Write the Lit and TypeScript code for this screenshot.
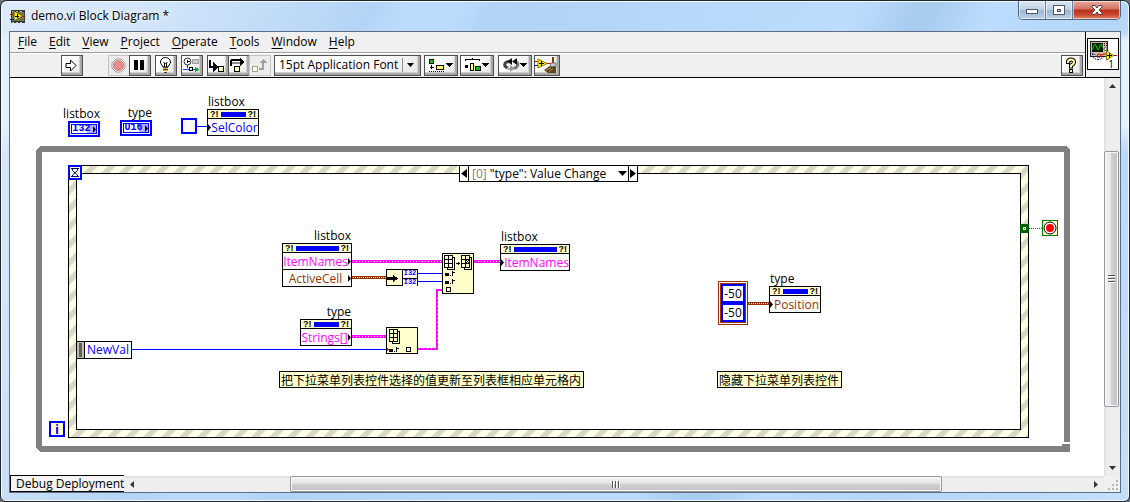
import { LitElement, html, svg, css, nothing, TemplateResult } from "lit";
import { customElement, property } from "lit/decorators.js";
import { styleMap } from "lit/directives/style-map.js";

/* Diagram coordinates start at the canvas corner. */
const ORIGIN = { x: 10, y: 78 };
const at = (x: number, y: number, w?: number, h?: number) =>
  styleMap({
    left: `${x - ORIGIN.x}px`,
    top: `${y - ORIGIN.y}px`,
    ...(w ? { width: `${w}px` } : {}),
    ...(h ? { height: `${h}px` } : {}),
  });

const icon = (w: number, h: number, body: unknown) =>
  html`<svg width=${w} height=${h} viewBox="0 0 ${w} ${h}" shape-rendering="crispEdges" aria-hidden="true">${body}</svg>`;

const viIcon = icon(15, 13, svg`
  <rect x="1" width="14" height="13" fill="#3a3a30"/>
  <path d="M2 1h2M6 1h2M10 1h2M2 12h2M6 12h2M10 12h2" stroke="#b8b89a" stroke-width="1"/>
  <rect x="2" y="2" width="12" height="9" fill="#6d7b4c"/>
  <path d="M4 1L13 6L4 11z" fill="#ffe600" stroke="#554" shape-rendering="auto"/>
  <path d="M5 6.500h4M7.500 4v4" stroke="#000"/>
  <path d="M0 4.500h4M13 6.500h2" stroke="#e00000"/><path d="M0 9.500h4" stroke="#0000d0"/>`);

const runIcon = icon(14, 13, svg`<path d="M2 4.500H6.500V1L12 6.500L6.500 12V8.500H2z" fill="#fff" stroke="#000" shape-rendering="auto"/>`);
const abortIcon = icon(15, 15, svg`<path d="M5 1h5l4 4v5l-4 4H5l-4-4V5z" fill="#fff" stroke="#9a9a9a" shape-rendering="auto"/><circle cx="7.500" cy="7.500" r="5" fill="#e68a8a" stroke="#d08080" shape-rendering="auto"/>`);
const pauseIcon = icon(12, 12, svg`<path d="M1 1h4v10H1zM7 1h4v10H7z" fill="#000"/>`);
const bulbIcon = icon(13, 16, svg`<path d="M4 10C4 8.500 1.500 7.500 1.500 5a5 4.500 0 0 1 10 0C11.500 7.500 9 8.500 9 10z" fill="#fff" stroke="#000" shape-rendering="auto"/><path d="M4.500 5l2 2 2-2M5.500 6v4M7.500 6v4" stroke="#000" fill="none" shape-rendering="auto"/><path d="M4 11h5v3H4z" fill="#f5b400"/><path d="M4 10.500h5M4 12.500h5M5 15h3" stroke="#444"/>`);
const retainIcon = icon(17, 16, svg`<circle cx="4.500" cy="4.500" r="3.500" fill="#fff" stroke="#333" shape-rendering="auto"/><path d="M3.500 2.500v4l3-2z" fill="#000"/><rect x="9.500" y="2.500" width="6" height="4" fill="#c9c9c9" stroke="#a0a0a0"/><path d="M4.500 8v3" stroke="#333"/><path d="M0 12.500h6" stroke="#0040ff"/><path d="M6.500 10.500h3v3h-3z" fill="#fff" stroke="#000"/><path d="M10 12.500h4" stroke="#0040ff"/><path d="M12 9.500l4 3-4 3z" fill="#00b400"/>`);
const intoIcon = icon(18, 15, svg`<path d="M2 2v7h5" stroke="#000" stroke-width="2" fill="none"/><path d="M5 4l5 5-5 5z" fill="#000"/><rect x="10.500" y="8.500" width="5" height="5" fill="#ffffb0" stroke="#000"/>`);
const overIcon = icon(16, 15, svg`<path d="M1 8V4q0-2 2-2h8" stroke="#000" stroke-width="2" fill="none"/><path d="M2 4.500h9" stroke="#888" stroke-width="2"/><path d="M10 0l5 4-5 4z" fill="#000"/><rect x="4.500" y="8.500" width="5" height="5" fill="#ffffb0" stroke="#000"/>`);
const outIcon = icon(18, 15, svg`<rect x="2.500" y="8.500" width="5" height="5" fill="#ffffd8" stroke="#a0a0a0"/><path d="M9 11h4V5" stroke="#a0a0a0" stroke-width="2" fill="none"/><path d="M9 5l4-4 4 4z" fill="#a0a0a0"/>`);
const caret = svg`<path d="M0 5h7l-3.500 4z" fill="#000"/>`;
const alignIcon = icon(24, 14, svg`<rect x=".5" y="1.500" width="4" height="4" fill="#00c800" stroke="#000"/><path d="M2.500 7v4M.5 9.500h4" stroke="#000"/><rect x="7.500" y="7.500" width="7" height="4" fill="#ffff70" stroke="#000"/><path d="M0 13.500h16" stroke="#000" stroke-dasharray="1 1"/><g transform="translate(17 0)">${caret}</g>`);
const distIcon = icon(24, 14, svg`<path d="M.5 3V1.500h14V3M7.500 0v2" stroke="#000" fill="none"/><rect x="0" y="7" width="3" height="3"/><rect x="5.500" y="5.500" width="3" height="7" fill="#ffff70" stroke="#000"/><rect x="10.500" y="8.500" width="5" height="4" fill="#00c800" stroke="#000"/><g transform="translate(17 0)">${caret}</g>`);
const orderIcon = icon(24, 14, svg`<path d="M5 10C0 8 1 4 6 3.500" stroke="#444" stroke-width="3" fill="none" shape-rendering="auto"/><path d="M12 3.500c4 1 4 5-1 7" stroke="#777" stroke-width="3" fill="none" shape-rendering="auto"/><path d="M9 0v7L4 3.500zM14 0v7L9 3.500z" fill="#111" shape-rendering="auto"/><path d="M4 10c2 1 2 1 4 1" stroke="#aaa" stroke-width="2" fill="none" shape-rendering="auto"/><path d="M7 7l5 3.500L7 14z" fill="#999" shape-rendering="auto"/><g transform="translate(17 0)">${caret}</g>`);
const cleanIcon = icon(22, 16, svg`<path d="M0 4.500h4M10 6.500h6" stroke="#e00"/><path d="M0 8.500h4" stroke="#00d"/><path d="M3 2l9 4.500-9 4.500z" fill="#ffee20" stroke="#8a7a00" shape-rendering="auto"/><path d="M4 6.500h5M6.500 4v5" stroke="#000"/><path d="M18 0v6" stroke="#7a3c10" stroke-width="2"/><path d="M16 6h5v4h-6z" fill="#c8c8c8" stroke="#777" shape-rendering="auto"/><path d="M14 9.500h7V16H13l-4-3z" fill="#5c4320" shape-rendering="auto"/><path d="M11 13l5-2M14 14.500l4-3" stroke="#b09050" shape-rendering="auto"/>`);
const helpIcon = icon(12, 16, svg`<g fill="none" stroke-linecap="square" shape-rendering="auto"><path d="M3 5q0-2.500 3-2.500t3 2.500q0 2-3 3.500v1" stroke="#000" stroke-width="4"/><path d="M3 5q0-2.500 3-2.500t3 2.500q0 2-3 3.500v1" stroke="#fff8a0" stroke-width="2"/></g><rect x="4.500" y="12.500" width="3" height="3" fill="#fff8a0" stroke="#000"/>`);
const scopeIcon = icon(28, 20, svg`<rect x=".5" y=".5" width="17" height="15" fill="#c8c0a0" stroke="#222"/><rect x="2" y="2" width="11" height="9" fill="#001800"/><path d="M2.500 8.500l2-5h1l2 5h1l2-5h1l1 3" stroke="#00e000" fill="none" shape-rendering="auto"/><path d="M14 2.500h1M16 2.500h1M14 4.500h1M16 4.500h1" stroke="#400"/><circle cx="15.500" cy="8" r="1.500" fill="#fff" stroke="#555" shape-rendering="auto"/><path d="M2 13.500h4" stroke="#777"/><path d="M2.500 12v3q3 5 8 3l3-2" fill="none" stroke="#0000b0" stroke-dasharray="2 1" shape-rendering="auto"/><path d="M8 17q-2-4 1-4t0 4M11 14l3-1h2M23 14.500h4" fill="none" stroke="#e00000" shape-rendering="auto"/><path d="M16.500 10v9l7-4.500z" fill="#ffee20" stroke="#887800" shape-rendering="auto"/><path d="M17 14.500h5M19.500 12v5" stroke="#000"/>`);

const tri = (dir: "l" | "r" | "u" | "d", s: number, fill = "#000", span = s * 2 - 1) => {
  const w = dir === "l" || dir === "r" ? s : span;
  const h = dir === "l" || dir === "r" ? span : s;
  const d = { l: `M${w} 0V${h}L0 ${h / 2}z`, r: `M0 0V${h}L${w} ${h / 2}z`, u: `M0 ${h}H${w}L${w / 2} 0z`, d: `M0 0H${w}L${w / 2} ${h}z` }[dir];
  return html`<svg width=${w} height=${h} viewBox="0 0 ${w} ${h}" aria-hidden="true"><path d=${d} fill=${fill}></path></svg>`;
};

interface Row { name: string; kind: "blue" | "pink" | "brown"; }

@customElement("property-node")
class PropertyNode extends LitElement {
  @property() label = "";
  @property() side: "in" | "out" = "in";
  @property({ attribute: false }) rows: Row[] = [];
  static styles = css`
    :host { display: flex; flex-direction: column; font: 12px/15px "Open Sans", sans-serif; color: #000; }
    .label { padding: 0 1px; }
    .label.out { align-self: flex-end; }
    .box { border: 1px solid #000; background: #fff; }
    .head { display: flex; align-items: center; gap: 2px; height: 8px; padding: 0 2px; background: #ffffcc; font: bold 9px/8px "Liberation Sans", sans-serif; }
    .bar { flex: 1; height: 5px; background: #0000ff; }
    .row { display: flex; align-items: center; height: 16px; border-top: 1px solid #000; white-space: nowrap; }
    .row.out { flex-direction: row-reverse; }
    .name { flex: 1; display: flex; justify-content: center; }
    .blue { color: #0000ff; } .pink { color: #ff00ff; } .brown { color: #993300; }
    svg { display: block; flex: none; }
  `;
  render() {
    return html`
      <span class="label ${this.side}">${this.label}</span>
      <div class="box">
        <div class="head"><span>?!</span><span class="bar"></span><span>?!</span></div>
        ${this.rows.map((r) => html`<div class="row ${this.side}">${tri("r", 3, "#000", 7)}<span class="name ${r.kind}">${r.name}</span></div>`)}
      </div>`;
  }
}

const nodes: { x: number; y: number; w: number; label: string; side: "in" | "out"; rows: Row[] }[] = [
  { x: 207, y: 94, w: 52, label: "listbox", side: "in", rows: [{ name: "SelColor", kind: "blue" }] },
  { x: 282, y: 228, w: 70, label: "listbox", side: "out", rows: [{ name: "ItemNames", kind: "pink" }, { name: "ActiveCell", kind: "brown" }] },
  { x: 500, y: 229, w: 70, label: "listbox", side: "in", rows: [{ name: "ItemNames", kind: "pink" }] },
  { x: 300, y: 304, w: 52, label: "type", side: "out", rows: [{ name: "Strings[]", kind: "pink" }] },
  { x: 769, y: 271, w: 52, label: "type", side: "in", rows: [{ name: "Position", kind: "brown" }] },
];
const terminals = [
  { x: 62, y: 106, w: 38, label: "listbox", type: "I32" },
  { x: 114, y: 105, w: 38, label: "type", type: "U16" },
];
const comments = [
  { x: 279, y: 371, text: "把下拉菜单列表控件选择的值更新至列表框相应单元格内" },
  { x: 717, y: 371, text: "隐藏下拉菜单列表控件" },
];

const grid = (x: number, y: number, mark = false) => svg`
  <g transform="translate(${x} ${y})" fill="none" stroke="#000">
    <path d="M9 2.500h1.500v12H3.500V13" />
    <rect x=".5" y=".5" width="8" height="12" fill="#ffffcc"/>
    <path d="M4.500 0v13M0 4.500h9M0 8.500h9"/>
    ${mark ? svg`<path d="M5 5h1v1H5zM7 5h1v1H7zM6 6h1v1H6zM5 7h1v1H5zM7 7h1v1H7z" fill="#000" stroke="none"/>` : nothing}
  </g>`;
const indexPin = (x: number, y: number) => svg`<path d="M${x} ${y}h4v3h-4zM${x + 5} ${y + 2}h1v1h-1zM${x + 7} ${y - 2}h1v5h-1zM${x + 7} ${y - 1}h3v1h-3z" fill="#000"/>`;

@customElement("block-diagram")
class BlockDiagram extends LitElement {
  static styles = css`
    :host { display: block; position: relative; overflow: hidden; background: #fff; font: 12px/15px "Open Sans", "Noto Sans CJK SC", sans-serif; color: #000; }
    .wires, .item { position: absolute; box-sizing: border-box; }
    .wires { left: 0; top: 0; }
    svg { display: block; }
    .terminal { display: flex; flex-direction: column; align-items: flex-end; }
    .pill { box-sizing: border-box; display: flex; align-items: center; justify-content: center; gap: 2px; width: 32px; height: 16px; border: 2px solid #0000ff; background: #fff; box-shadow: inset 0 0 0 1px #fff, inset 0 0 0 2px #0000ff, inset -9px 0 0 2px #b0b0ff; color: #0000ff; font: bold 10px/10px "Liberation Mono", monospace; }
    .selector { display: flex; background: #fff; border: 1px solid #000; }
    .selector button { border: 0; padding: 0; margin: 0; background: #fff; font: inherit; color: #000; display: flex; align-items: center; justify-content: center; flex: 0 0 8px; }
    .selector .case { flex: 1; gap: 3px; justify-content: flex-start; border: solid #000; border-width: 0 1px; padding: 0 1px 0 3px; white-space: nowrap; }
    .case .index { color: #808080; }
    .case .name { flex: 1; text-align: left; }
    .comment { border: 1px solid #000; background: #ffffcc; padding: 0 2px 0 1px; white-space: nowrap; font: 12px/15px "Noto Sans CJK SC", sans-serif; }
    .newval { display: flex; border: 1px solid #000; background: #fff; color: #0000ff; line-height: 16px; }
    .newval .grip { width: 7px; background: #c0c0a0; border-right: 1px solid #000; display: flex; }
    .newval .grip::before { content: ""; width: 3px; margin: 1px 2px; background: #606060; }
    .newval .name { flex: 1; text-align: center; }
    .constant { display: flex; flex-direction: column; gap: 4px; border: 1px solid #993300; background: #0000ff; padding: 4px; box-shadow: inset 0 0 0 1px #fff, inset 0 0 0 2px #993300; }
    .constant span { flex: 1; background: #fff; text-align: center; line-height: 15px; }
    .unbundle { display: grid; grid-template-columns: 15px 1fr; border: 1px solid #000; background: #ffffcc; }
    .unbundle .types { display: grid; grid-template-rows: 1fr 1fr; border-left: 1px solid #000; background: #fff; color: #0000ff; font: bold 7px/7px "Liberation Mono", monospace; text-align: center; }
    .types span + span { border-top: 1px solid #000; }
    .unbundle svg { align-self: center; }
    .iter { display: grid; place-items: center; border: 2px solid #0000ff; background: #ffffcc; color: #0000ff; font: bold 13px/12px "Open Sans", sans-serif; }
  `;

  wires() {
    return html`<svg class="wires" width="1094" height="398" viewBox="10 78 1094 398" shape-rendering="crispEdges" aria-hidden="true">
      <defs>
        <pattern id="hatch" width="18" height="18" patternUnits="userSpaceOnUse">
          <rect width="18" height="18" fill="#ffffe4"></rect>
          <path d="M4 0h8L0 12V4zM18 4v8l-6 6H4z" fill="#d8d8c4" shape-rendering="auto"></path>
        </pattern>
      </defs>
      <path d="M40 146H1066L1070 150V442H1064V152H42V446H1062V444H1070V452H40L36 448V150z" fill="#808080"></path>
      <path d="M68.500 165.500H1028.500V437.500H68.500zM76.500 173.500V429.500H1020.500V173.500z" fill="url(#hatch)" fill-rule="evenodd" stroke="#000"></path>
      <rect x="69" y="166" width="12" height="13" fill="#ffffe4" stroke="#0000ff" stroke-width="2"></rect>
      <path d="M71 168.500h8M71 176.500h8" stroke="#000080"></path>
      <path d="M72.500 169v1.500l5 4.500v1M77.500 169v1.500l-5 4.500v1" fill="none" stroke="#000080" shape-rendering="auto"></path>

      <rect x="182" y="119" width="14" height="14" fill="#f8f8f8" stroke="#0000ff" stroke-width="2"></rect>
      <path d="M197 126.500H207M418 273.500H442M418 281.500H442M132 349.500H386" stroke="#0000ff"></path>
      <path d="M352 261.500H442M474 261.500H500M352 336.500H386" stroke="#ff00ff" stroke-width="3"></path>
      <path d="M353 261.500H442M475 261.500H500M353 336.500H386" stroke="#fff" stroke-dasharray="1 2"></path>
      <path d="M418 349H437V290H442" stroke="#ff00ff" stroke-width="2" fill="none"></path>
      <path d="M419 348.500H436M437.500 347V291" stroke="#fff" stroke-dasharray="1 3" fill="none"></path>
      <path d="M352 277.500H386M748 303.500H769" stroke="#993300" stroke-width="3"></path>
      <path d="M353 277.500H386M749 303.500H769" stroke="#fff" stroke-dasharray="1 1"></path>

      <rect x="442.500" y="253.500" width="31" height="40" fill="#ffffcc" stroke="#000"></rect>
      ${grid(444, 255)} ${grid(461, 255, true)}
      <path d="M456 263.500h4M458.500 262v3" stroke="#000"></path>
      ${indexPin(445, 273)} ${indexPin(445, 281)}
      <rect x="446.500" y="287.500" width="4" height="4" fill="none" stroke="#000"></rect>

      <rect x="386.500" y="327.500" width="31" height="26" fill="#ffffcc" stroke="#000"></rect>
      ${grid(389, 329)} ${indexPin(389, 349)}
      <path d="M387 347l2 2.500-2 2z" fill="#ff0000"></path>
      <rect x="406.500" y="347.500" width="4" height="4" fill="none" stroke="#000"></rect>

      <rect x="1020" y="224" width="9" height="9" fill="#006000"></rect>
      <rect x="1023" y="227" width="3" height="3" fill="#fff"></rect><rect x="1024" y="228" width="1" height="1" fill="#008000"></rect>
      <path d="M1029 228.500H1042" stroke="#008000" stroke-dasharray="1 1"></path>
      <rect x="1042.500" y="220.500" width="15" height="15" fill="#ffffcc" stroke="#008000"></rect>
      <circle cx="1050" cy="228" r="6" fill="#fff" stroke="#000" shape-rendering="auto"></circle>
      <circle cx="1050" cy="228" r="4" fill="#ff0000" shape-rendering="auto"></circle>
    </svg>`;
  }

  render(): TemplateResult {
    return html`
      ${this.wires()}
      ${nodes.map((n) => html`<property-node class="item" style=${at(n.x, n.y, n.w)} .label=${n.label} .side=${n.side} .rows=${n.rows}></property-node>`)}
      ${terminals.map((t) => html`<div class="item terminal" style=${at(t.x, t.y, t.w)}><span>${t.label}</span><span class="pill">${t.type}${tri("r", 3, "#000", 7)}</span></div>`)}
      <div class="item selector" style=${at(459, 165, 179, 17)}>
        <button aria-label="Previous case">${tri("l", 6, "#000", 9)}</button>
        <button class="case" aria-haspopup="listbox"><span class="index">[0]</span><span class="name">"type": Value Change</span>${tri("d", 5, "#000", 9)}</button>
        <button aria-label="Next case">${tri("r", 6, "#000", 9)}</button>
      </div>
      <div class="item unbundle" style=${at(386, 269, 32, 17)}>
        ${icon(15, 7, svg`<path d="M0 2h6V0l5 3.500L6 7V5H0z"/>`)}
        <div class="types"><span>I32</span><span>I32</span></div>
      </div>
      <div class="item newval" style=${at(76, 341, 56, 18)}><span class="grip"></span><span class="name">NewVal</span></div>
      <div class="item constant" style=${at(718, 281, 30, 44)}><span>-50</span><span>-50</span></div>
      <div class="item iter" style=${at(49, 421, 16, 16)}>i</div>
      ${comments.map((c) => html`<div class="item comment" style=${at(c.x, c.y)}>${c.text}</div>`)}
    `;
  }
}

@customElement("scroll-strip")
class ScrollStrip extends LitElement {
  @property({ reflect: true }) dir: "v" | "h" = "v";
  @property({ type: Number }) before = 0;
  @property({ type: Number }) size = 0;
  @property({ type: Number }) after = 0;
  static styles = css`
    :host { display: flex; background: #eeeeee; }
    :host([dir="v"]) { flex-direction: column; width: 16px; box-shadow: inset 2px 0 1px #e2e2e2; }
    :host([dir="h"]) { height: 16px; box-shadow: inset 0 2px 1px #e2e2e2; }
    button { flex: none; width: 16px; height: 16px; padding: 0; border: 0; background: transparent; display: grid; place-items: center; }
    .track { flex: 1; display: flex; flex-direction: inherit; }
    .thumb { box-sizing: border-box; border: 1px solid #979797; border-radius: 2px; box-shadow: inset 0 0 0 1px #f8f8f8; display: grid; place-items: center; }
    .thumb.v { margin-right: 1px; background: linear-gradient(90deg, #f4f4f4, #e6e6e6 45%, #d0d0d4 50%, #c4c4c8); }
    .thumb.h { background: linear-gradient(#f4f4f4, #e6e6e6 45%, #d0d0d4 50%, #c4c4c8); }
    .grip.v { width: 7px; height: 8px; background: repeating-linear-gradient(#555 0 1px, #fff 1px 2px, transparent 2px 3px); }
    .grip.h { width: 8px; height: 7px; background: repeating-linear-gradient(90deg, #555 0 1px, #fff 1px 2px, transparent 2px 3px); }
    svg { display: block; }
  `;
  render() {
    const v = this.dir === "v";
    return html`
      <button aria-label=${v ? "Scroll up" : "Scroll left"}>${tri(v ? "u" : "l", 4, "#333")}</button>
      <div class="track">
        <span style=${styleMap({ flex: `${this.before} 0 0` })}></span>
        <div class="thumb ${this.dir}" style=${styleMap({ flex: `${this.size} 0 0` })}><span class="grip ${this.dir}"></span></div>
        <span style=${styleMap({ flex: `${this.after} 0 0` })}></span>
      </div>
      <button aria-label=${v ? "Scroll down" : "Scroll right"}>${tri(v ? "d" : "r", 4, "#333")}</button>`;
  }
}

const menus = ["File", "Edit", "View", "Project", "Operate", "Tools", "Window", "Help"];

@customElement("app-root")
class AppRoot extends LitElement {
  static styles = css`
    :host { display: block; height: 100vh; background: #6a7078; font: 12px/16px "Open Sans", sans-serif; color: #000; }
    * { box-sizing: border-box; }
    svg { display: block; }
    button { font: inherit; color: inherit; padding: 0; margin: 0; }
    .window { height: 100%; display: flex; flex-direction: column; padding: 0 8px 8px; border: 1px solid #20262e; border-radius: 7px 7px 6px 6px; box-shadow: inset 0 0 0 1px #f2f9ff; background: linear-gradient(#e4f1fe00 30px, #e4f1fe 40px, #e4f1fe 125px, #b9dafa00 150px), linear-gradient(115deg, #dcebfb 0, #cfe3f9 160px, #b3d4f6 340px, #bbdcfc 370px, #bbdcfc 420px, #b0d3f6 450px, #b8dafb 700px, #bbdcfd 780px, #a9cdf0 830px, #a9cdf0 850px, #bbdcfd 900px, #b4d6f9 1000px, #c4dffa); }
    .title { flex: none; height: 30px; display: flex; align-items: flex-start; }
    .caption { flex: 1; display: flex; align-items: center; gap: 6px; padding: 7px 0 0 1px; }
    .caption span { text-shadow: 0 0 8px #fff, 0 0 6px #fff; }
    .controls { display: flex; height: 19px; border: 1px solid #53657c; border-top: 0; border-radius: 0 0 5px 5px; overflow: hidden; }
    .controls button { width: 27px; border: 0; border-right: 1px solid #6b7d94; display: grid; place-items: center; box-shadow: inset 0 0 0 1px #ffffff90; background: linear-gradient(#dbe8f5, #bccfe2 50%, #9db5cd 52%, #bcd2e8); }
    .controls .close { width: 47px; border-right: 0; background: linear-gradient(#e8aa9c, #d47060 45%, #b8301c 50%, #c8452c 75%, #e08868); }
    .client { flex: 1; min-height: 0; display: flex; flex-direction: column; border: 1px solid #5c6e86; background: #f0f0f0; }
    .top { flex: none; display: flex; height: 46px; border-bottom: 1px solid #000; }
    .bars { flex: 1; min-width: 0; display: flex; flex-direction: column; }
    .menu { display: flex; gap: 12px; height: 21px; padding: 0 8px; border-bottom: 1px solid #a0a0a0; }
    .menu button { border: 0; background: none; line-height: 18px; }
    .menu u { text-underline-offset: 2px; }
    .tools { flex: 1; display: flex; align-items: flex-start; padding: 1px 2px 0 51px; border-top: 1px solid #fff; }
    .tools button { height: 21px; min-width: 22px; border: 1px solid #505050; display: grid; place-items: center; background: linear-gradient(135deg, #fff 30%, #e0e0e0); box-shadow: inset -2px -2px 0 #a8a8a8, inset -3px -3px 0 #d0d0d0, inset 1px 1px 0 #fff; padding: 0 2px 1px 0; }
    .tools button:disabled { border-color: #c4c4c4; background: #ececec; box-shadow: none; }
    .tools button + button { margin-left: -1px; }
    .group { display: flex; margin-right: 4px; }
    .group.run { margin-right: 25px; }
    .group.near { margin-right: 3px; }
    .group.tight { margin-right: 2px; }
    .tools .menuish { width: 34px; padding: 0 3px 1px 2px; }
    .tools .wide { width: 26px; }
    .spacer { flex: 1; }
    .font { position: relative; }
    select { width: 147px; height: 21px; appearance: none; border: 1px solid #505050; border-radius: 0; margin: 0; padding: 0 20px 1px 4px; font: inherit; color: #000; background: linear-gradient(135deg, #fff 60%, #e4e4e4); box-shadow: inset -2px -2px 0 #a8a8a8, inset -3px -3px 0 #d0d0d0; }
    .arrow { position: absolute; right: 7px; top: 3px; height: 14px; width: 12px; border-left: 1px solid #909090; display: flex; align-items: center; justify-content: flex-end; pointer-events: none; }
    .vi { flex: none; width: 35px; border-left: 1px solid #000; padding: 6px 0 0 1px; }
    .badge { width: 32px; height: 32px; border: 1px solid #000; background: #fff; display: flex; flex-direction: column; padding: 2px; }
    .badge svg { flex: none; }
    .badge span { align-self: flex-end; font: 10px/10px "Open Sans", sans-serif; padding-right: 2px; margin-top: -2px; }
    .work { flex: 1; min-height: 0; display: flex; }
    block-diagram { flex: 1; }
    .foot { flex: none; display: flex; height: 16px; }
    .deploy { width: 114px; border: 1px solid #000; border-right: 0; padding: 0 0 0 5px; line-height: 14px; background: #f4f4f4; text-align: left; white-space: nowrap; height: 17px; margin-top: -1px; position: relative; }
    .foot scroll-strip { flex: 1; }
    .size { width: 16px; display: grid; place-items: end; padding: 2px; }
  `;
  render() {
    return html`
      <div class="window">
        <header class="title">
          <div class="caption">${viIcon}<span>demo.vi Block Diagram *</span></div>
          <div class="controls">
            <button aria-label="Minimize">${icon(13, 8, svg`<rect x=".5" y="3.500" width="11" height="4" fill="#fff" stroke="#4c566a"/>`)}</button>
            <button aria-label="Maximize">${icon(12, 10, svg`<path d="M.5.5h11v9H.5zM4.500 4.500v2h3v-2z" fill="#fff" fill-rule="evenodd" stroke="#4c566a"/>`)}</button>
            <button class="close" aria-label="Close">${icon(12, 10, svg`<path d="M1 .5h3l2 2.500 2-2.500h3v1.500l-3 3 3 3v1.500H8L6 7l-2 2.500H1V8l3-3-3-3z" fill="#fff" stroke="#5c4048" shape-rendering="auto"/>`)}</button>
          </div>
        </header>
        <main class="client">
          <div class="top">
            <div class="bars">
              <nav class="menu">${menus.map((m) => html`<button><u>${m[0]}</u>${m.slice(1)}</button>`)}</nav>
              <div class="tools">
                <div class="group run"><button aria-label="Run">${runIcon}</button></div>
                <div class="group"><button aria-label="Abort" disabled>${abortIcon}</button><button aria-label="Pause">${pauseIcon}</button></div>
                <div class="group"><button aria-label="Highlight execution">${bulbIcon}</button></div>
                <div class="group"><button aria-label="Retain wire values">${retainIcon}</button></div>
                <div class="group near"><button aria-label="Step into">${intoIcon}</button><button aria-label="Step over">${overIcon}</button><button aria-label="Step out" disabled>${outIcon}</button></div>
                <div class="group near font">
                  <select aria-label="Font"><option>15pt Application Font</option></select>
                  <span class="arrow">${tri("d", 4)}</span>
                </div>
                <div class="group tight"><button class="menuish" aria-label="Align objects">${alignIcon}</button></div>
                <div class="group"><button class="menuish" aria-label="Distribute objects">${distIcon}</button></div>
                <div class="group tight"><button class="menuish" aria-label="Reorder">${orderIcon}</button></div>
                <div class="group"><button class="wide" aria-label="Clean up diagram">${cleanIcon}</button></div>
                <span class="spacer"></span>
                <div><button aria-label="Context help">${helpIcon}</button></div>
              </div>
            </div>
            <div class="vi"><div class="badge">${scopeIcon}<span>1</span></div></div>
          </div>
          <div class="work">
            <block-diagram></block-diagram>
            <scroll-strip dir="v" before="57" size="256" after="53"></scroll-strip>
          </div>
          <div class="foot">
            <button class="deploy">Debug Deployment</button>
            <scroll-strip dir="h" before="150" size="652" after="146"></scroll-strip>
            <span class="size">${icon(10, 10, svg`<path d="M8 0h2v2H8zM4 4h2v2H4zM8 4h2v2H8zM0 8h2v2H0zM4 8h2v2H4zM8 8h2v2H8z" fill="#b8b8b8"/>`)}</span>
          </div>
        </main>
      </div>`;
  }
}
